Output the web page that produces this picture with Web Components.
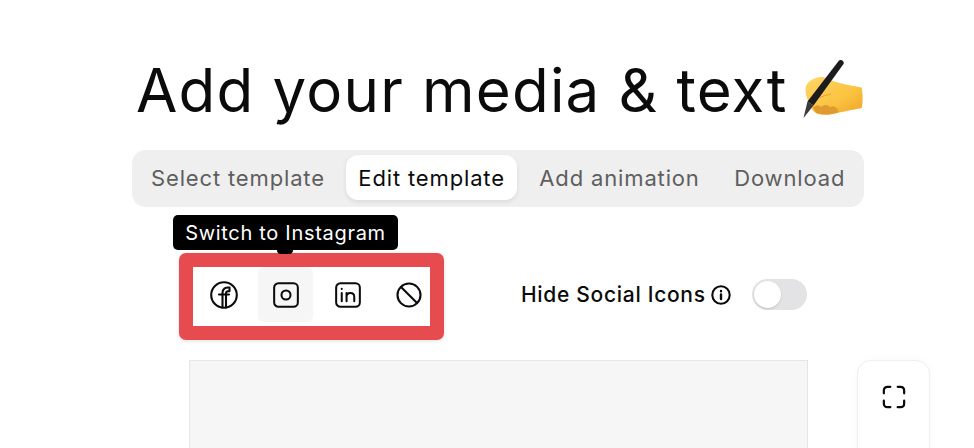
<!DOCTYPE html>
<html lang="en"><head><meta charset="utf-8"><title>Add your media &amp; text</title>
<style>
html,body{margin:0;padding:0;background:#fff;height:448px;overflow:hidden}
body{font-family:"Inter","Liberation Sans",sans-serif;color:#0a0a0a}
</style></head><body>
<editor-page>
  <page-title>Add your media &amp; text</page-title>
  <step-tabs>
    <step-tab style="margin-right:-1px">Select template</step-tab>
    <step-tab active>Edit template</step-tab>
    <step-tab>Add animation</step-tab>
    <step-tab>Download</step-tab>
  </step-tabs>
  <social-row></social-row>
  <work-area></work-area>
</editor-page>
<script>
function def(name,html){customElements.define(name,class extends HTMLElement{constructor(){super();this.attachShadow({mode:'open'}).innerHTML=html;}});}
def('editor-page',`<style>:host{display:flex;flex-direction:column;width:974px;height:448px;overflow:hidden;padding-top:54px;box-sizing:border-box}</style><slot></slot>`);
def('page-title',`<style>:host{display:flex;align-items:center;margin-left:136px;height:73px;font:400 60px/73px "Inter",sans-serif;letter-spacing:1.2px;color:#0b0b0b;white-space:nowrap}
svg{width:64px;height:64px;flex:none;margin:-2px 0 0 13px}</style><span><slot></slot></span>
<svg viewBox="0 0 64 64" role="img" aria-label="writing hand">
<defs><linearGradient id="h" x1="0" y1="0" x2="1" y2="1"><stop offset="0" stop-color="#ffd766"/><stop offset=".6" stop-color="#fbc340"/><stop offset="1" stop-color="#efa32a"/></linearGradient></defs>
<path d="M4.5 31C5 24 12 19.5 21 19C25 19 28 21.5 32 23C41 26 50 27.5 60.5 29.5C62 34 62 47 60.5 50C53 51.5 45 53 38 54.5C31 57 21 57.5 15 55C11 53 9 48 8 44C6 41 4.3 36 4.5 31Z" fill="url(#h)"/>
<path d="M8 44C13 40 22 38 30 36" fill="none" stroke="#e9a43a" stroke-width="1.2"/>
<path d="M12 50C15 46 18 47 20 49C24 46 27 47 29 49C33 47 36 49 38 54C31 57 21 57.5 15 55Z" fill="#df9a30"/>
<path d="M38 2.5C40 .8 43.8 3.5 42.5 6L12.5 47.5L6.5 43.5Z" fill="#1c1c1f"/>
<path d="M6.5 43.5L12.5 47.5L2.5 60Z" fill="#3a3a3e"/>
</svg>`);
def('step-tabs',`<style>:host{display:flex;align-items:center;gap:9.5px;margin:23px 0 0 132px;width:732px;height:57px;box-sizing:border-box;background:#efefef;border-radius:14px;padding:5px 0 7px 6.5px}</style><slot></slot>`);
def('step-tab',`<style>:host{display:flex;align-items:center;justify-content:center;height:45px;box-sizing:border-box;padding:0 12.5px;border-radius:12px;font:400 22px/1 "Inter",sans-serif;letter-spacing:.85px;color:#5e5e5e;white-space:nowrap}
:host([active]){background:#fff;color:#0b0b0b;box-shadow:0 2px 5px rgba(0,0,0,.09)}</style><slot></slot>`);
def('social-row',`<style>
:host{display:flex;align-items:center;position:relative;margin:46px 0 0 179px;width:628px;height:87px}
.box{box-sizing:border-box;width:265px;height:87px;border:14px solid #e64c4f;border-radius:7px;display:flex;background:#fff;box-shadow:0 1px 4px rgba(0,0,0,.12)}
.b{width:55px;height:55px;margin-right:7px;display:flex;align-items:center;justify-content:center;border-radius:6px;flex:none}
.b:first-child{margin-left:3px}
.b.on{background:#f6f6f6}
svg{fill:none;stroke:#0b0b0b;stroke-width:2.1;stroke-linecap:round;stroke-linejoin:round}
.tip{position:absolute;left:-6px;top:-38px;width:225px;height:35px;box-sizing:border-box;background:#000;color:#fff;border-radius:5px;font:400 20px/36px "Inter",sans-serif;letter-spacing:.7px;text-align:center;white-space:nowrap}
.tip::after{content:"";position:absolute;left:104px;bottom:-4px;width:16px;height:6px;background:#000;border-radius:0 0 4px 4px}
.right{display:flex;align-items:center;padding-bottom:4px}
.h{margin-left:77px;font:500 21px/1 "Inter",sans-serif;letter-spacing:.7px;color:#0b0b0b;white-space:nowrap}
.i{margin-left:5px;flex:none}
.t{margin-left:21px;width:55px;height:31px;border-radius:16px;background:#e3e3e5;position:relative;flex:none}
.t::after{content:"";position:absolute;left:2px;top:2px;width:27px;height:27px;border-radius:50%;background:#fff;box-shadow:0 1px 2px rgba(0,0,0,.15)}
</style>
<div class="box">
 <div class="b"><svg width="28" height="28" viewBox="0 0 28 28"><circle cx="14" cy="14" r="12.8"/><path d="M12.5 26.5V12C12.5 8 15 6.2 19.5 6.6V10.2C17 10 16 10.8 16 12.5V26.5M9 13.5H19" /></svg></div>
 <div class="b on" style="padding-left:1px;box-sizing:border-box"><svg width="26" height="26" viewBox="0 0 27 27"><rect x="1.2" y="1.2" width="24.6" height="24.6" rx="4.5"/><circle cx="13.5" cy="13.5" r="4.7"/></svg></div>
 <div class="b" style="padding-left:1px;box-sizing:border-box"><svg width="26" height="26" viewBox="0 0 27 27"><rect x="1.2" y="1.2" width="24.6" height="24.6" rx="4.5"/><path d="M7 11.5V20M7 7V7.3M12 20V11.5M12 15.5C12 12.5 14 11.5 16 11.5C18.5 11.5 20 13 20 15.5V20"/></svg></div>
 <div class="b" style="margin:0 0 0 -1px"><svg width="26" height="26" viewBox="0 0 26 26" stroke-width="2.4"><circle cx="13" cy="13" r="11.5"/><path d="M5 5L21 21"/></svg></div>
</div>
<div class="tip">Switch to Instagram</div>
<div class="right"><span class="h">Hide Social Icons</span>
<svg class="i" width="20" height="20" viewBox="0 0 20 20"><circle cx="10" cy="10" r="8.7"/><path d="M10 9.5V14M10 6V6.2" stroke-width="2.4"/></svg>
<div class="t"></div></div>`);
def('work-area',`<style>:host{display:flex;margin:20px 0 0 189px;gap:49px;height:88px;overflow:visible}
.c{width:619px;height:120px;box-sizing:border-box;background:#f6f6f6;border:1px solid #e6e6e6;flex:none}
.s{width:73px;height:120px;box-sizing:border-box;background:#fff;border:1px solid #efefef;border-radius:14px;flex:none;display:flex;justify-content:center;align-items:flex-start;padding-top:24px;box-shadow:0 0 8px rgba(0,0,0,.03)}
svg{fill:none;stroke:#0b0b0b;stroke-width:2.4;stroke-linecap:round;stroke-linejoin:round}</style>
<div class="c"></div>
<div class="s"><svg width="24" height="24" viewBox="0 0 26 26"><path d="M2 9V6C2 3.5 3.5 2 6 2H9M17 2H20C22.5 2 24 3.5 24 6V9M24 17V20C24 22.5 22.5 24 20 24H17M9 24H6C3.5 24 2 22.5 2 20V17"/></svg></div>`);
</script>
</body></html>
